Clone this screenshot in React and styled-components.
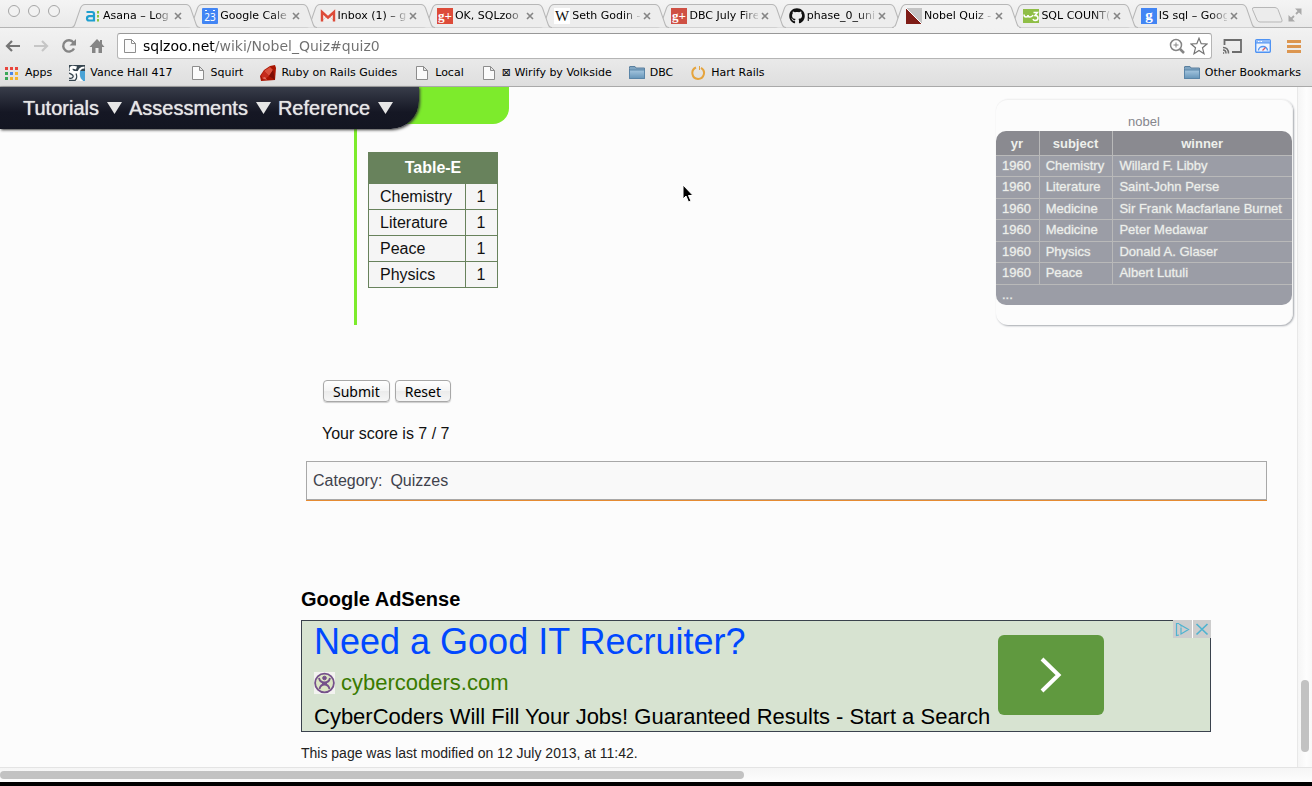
import React from "react";
import styled, { createGlobalStyle } from "styled-components";
import { FaGithub } from "react-icons/fa";

const GlobalStyle = createGlobalStyle`
  *, *::before, *::after { box-sizing: border-box; }
  body {
    margin: 0;
    background: #fcfcfc;
    color: #111;
    font-family: "Liberation Sans", Arial, sans-serif;
  }
  button, input { font: inherit; color: inherit; margin: 0; }
  button { background: none; border: 0; padding: 0; cursor: pointer; }
  a { color: inherit; text-decoration: none; }
  h2, p { margin: 0; }
  svg { display: block; flex: none; }
`;

const Window = styled.div`
  min-height: 100vh;
  display: flex;
  flex-direction: column;
  border-bottom: 4px solid #000;
`;

/* ---------- browser chrome ---------- */

const Chrome = styled.header`
  font-family: "DejaVu Sans", sans-serif;
  font-size: 11px;
  color: #000;
  border-bottom: 1px solid #a9a9a9;
`;

const TabStrip = styled.div`
  display: flex;
  height: 28px;
  background: linear-gradient(#f4f4f4, #e9e9e9);
  box-shadow: inset 0 -1px #b4b4b4;
`;

const Lights = styled.div`
  display: flex;
  gap: 8px;
  width: 71px;
  padding: 5px 0 0 8px;
`;

const Light = styled.button`
  width: 12px;
  height: 12px;
  border: 1px solid #a6a6a6;
  border-radius: 50%;
  background: #f2f2f2;
`;

const Tabs = styled.div`
  flex: 1;
  display: flex;
  min-width: 0;
`;

const Tab = styled.div`
  position: relative;
  flex: 1 1 0;
  min-width: 0;
  display: flex;
  align-items: center;
  padding: 4px 3px 0 14px;
  z-index: ${(p) => p.$z};
`;

const TabShape = styled.svg`
  position: absolute;
  top: 3px;
  left: 0;
  width: 110%;
  height: 25px;
`;

const TabTitle = styled.button`
  position: relative;
  display: flex;
  align-items: center;
  gap: 2px;
  flex: 1;
  min-width: 0;
`;

const TabText = styled.span`
  flex: 1;
  min-width: 0;
  white-space: nowrap;
  text-align: left;
  line-height: 16px;
  mask-image: linear-gradient(90deg, #000 75%, #0002);
`;

const TabClose = styled.button`
  position: relative;
  padding: 3px;
`;

const StripEnd = styled.div`
  display: flex;
  width: 68px;
  justify-content: space-between;
  padding: 2px 10px 0 7px;
`;

const Toolbar = styled.div`
  display: flex;
  align-items: center;
  height: 32px;
  padding: 3px 7px 0 5px;
  background: linear-gradient(#f2f2f2, #e9e9e9);
`;

const IconButton = styled.button`
  display: flex;
  justify-content: center;
  width: ${(p) => p.$w}px;
`;

const Omnibox = styled.label`
  flex: 1;
  display: flex;
  align-items: center;
  height: 26px;
  margin-right: 9px;
  padding: 0 3px 0 4px;
  gap: 5px;
  background: #fff;
  border: 1px solid #b5b5b5;
  border-top-color: #989898;
  border-radius: 3px;
`;

const Address = styled.input`
  flex: 1;
  min-width: 0;
  height: 24px;
  padding: 0;
  border: 0;
  outline: 0;
  font-size: 14px;
  background: linear-gradient(90deg, #000 72px, #707070 72px);
  background-clip: text;
  -webkit-text-fill-color: transparent;
`;

const Bookmarks = styled.nav`
  display: flex;
  align-items: center;
  height: 26px;
  padding: 0 11px 1px 4px;
  background: linear-gradient(#e9e9e9, #dedede);
`;

const Bookmark = styled.a`
  display: flex;
  align-items: center;
  gap: ${(p) => p.$gap || 5}px;
  margin-right: 17px;
  white-space: nowrap;
  &:last-child { margin: 0 0 0 auto; }
`;

/* ---------- web page ---------- */

const Viewport = styled.div`
  flex: 1;
  display: flex;
`;

const Page = styled.main`
  position: relative;
  flex: 1;
  min-width: 0;
  background: #fcfcfc;
`;

const SiteNav = styled.nav`
  position: absolute;
  top: 0;
  left: 0;
  z-index: 2;
  display: flex;
  gap: 7px;
  padding: 0 26px 0 23px;
  height: 42px;
  border-bottom-right-radius: 28px;
  background: linear-gradient(#383d4a, #151724 60%, #131521);
  box-shadow: 1px 1px 3px #333;
`;

const NavLink = styled.a`
  display: flex;
  align-items: center;
  gap: 8px;
  font-size: 20px;
  line-height: 40px;
  color: #e6e6e6;
  padding-bottom: 1px;
  text-shadow: 0 0 1px #e6e6e6;
`;

const QuizRow = styled.section`
  display: flex;
  justify-content: space-between;
  align-items: flex-start;
  padding-right: 4px;
`;

const Question = styled.div`
  height: 238px;
  margin-left: 354px;
  border-left: 3px solid #7deb2c;
`;

const QuestionTab = styled.div`
  width: 152px;
  height: 37px;
  background: #7deb2c;
  border-bottom-right-radius: 16px;
`;

const AnswerTable = styled.table`
  margin: 28px 0 0 11px;
  width: 130px;
  border-collapse: collapse;
  font-size: 16px;
  line-height: 25px;
  background: #f5f5f5;
  th, td { border: 1px solid #68825c; padding: 0 11px; text-align: left; }
  th { background: #68825c; color: #fff; text-align: center; line-height: 30px; }
`;

const SchemaCard = styled.aside`
  width: 297px;
  margin-top: 12px;
  padding-bottom: 20px;
  border: 1px solid #f0f0f0;
  border-width: 1px 1px 0 0;
  border-radius: 12px;
  box-shadow: 1px 1px 2px #a5a8ae;
`;

const SchemaTable = styled.table`
  width: 100%;
  height: 174px;
  border-collapse: collapse;
  border-radius: 10px;
  overflow: hidden;
  font-size: 13px;
  line-height: 16px;
  color: #eef0ec;
  caption { color: #85868c; padding: 14px 0 1px; }
  thead tr { height: 24px; }
  tbody { background: #9b9da6; }
  th, td { padding: 0 7px 0 6px; text-align: left; white-space: nowrap; border-top: 1px solid #b9b9b9; }
  th { padding-top: 2px; text-align: center; border-top: 0; background: #8a8a90; }
  th:first-child { border-top-left-radius: 10px; }
  th:last-child { border-top-right-radius: 10px; }
  td { -webkit-text-stroke: 1px #eef0ec55; }
  th + th, td + td { border-left: 1px solid #b9b9b9; }
`;

const Controls = styled.form`
  padding: 55px 0 0 322px;
  font-size: 16px;
  line-height: 20px;
`;

const ButtonRow = styled.div`
  display: flex;
  gap: 5px;
  padding-left: 1px;
`;

const FormButton = styled.button`
  height: 22px;
  padding: 2px 9px 0;
  border: 1px solid #a8a8a8;
  border-radius: 4px;
  background: linear-gradient(#fff, #f4f4f4 50%, #ebebeb 50%, #f6f6f6);
  box-shadow: 0 1px 1px #ccc;
  font: 14px/18px "Noto Sans", "Open Sans", sans-serif;
  color: #000;
`;

const Score = styled.p`
  padding: 22px 0 17px;
`;

const Category = styled.div`
  display: flex;
  gap: 8px;
  margin: 0 30px 0 306px;
  padding: 9px 6px;
  border: 1px solid #a8a8a8;
  box-shadow: 0 1px #e58b32;
  background: #f9f9f9;
  font-size: 16px;
  line-height: 19px;
  color: #3f424c;
`;

const AdSection = styled.section`
  margin: 87px 86px 0 301px;
`;

const AdTitle = styled.h2`
  font-size: 20px;
  line-height: 24px;
  color: #000;
`;

const Ad = styled.div`
  position: relative;
  display: flex;
  height: 112px;
  margin-top: 9px;
  padding-left: 12px;
  gap: 8px;
  border: 1px solid #3a424d;
  background: #d7e3d1;
`;

const AdCopy = styled.div`
  display: flex;
  flex-direction: column;
  white-space: nowrap;
`;

const AdHeadline = styled.a`
  font-size: 36px;
  line-height: 42px;
  color: #0048ff;
`;

const AdSite = styled.a`
  display: flex;
  align-items: center;
  gap: 6px;
  font-size: 22px;
  line-height: 24px;
  padding: 8px 0 7px;
  color: #3a7a00;
`;

const AdText = styled.p`
  font-size: 22px;
  line-height: 30px;
  color: #000;
`;

const AdGo = styled.button`
  display: flex;
  align-items: center;
  justify-content: center;
  width: 106px;
  height: 80px;
  margin-top: 14px;
  border-radius: 6px;
  background: #60993f;
`;

const AdChoices = styled.div`
  position: absolute;
  top: -1px;
  right: -1px;
  display: flex;
  gap: 1px;
  background: #fff;
  button { background: #cdcdcd; }
`;

const Modified = styled.p`
  margin-top: 12px;
  padding-bottom: 5px;
  font-size: 14px;
  line-height: 18px;
  color: #222;
`;

const VerticalBar = styled.div`
  display: flex;
  flex-direction: column;
  justify-content: flex-end;
  align-items: center;
  width: 15px;
  padding-bottom: 15px;
  border-left: 1px solid #e8e8e8;
  background: linear-gradient(90deg, #f5f5f5, #fdfdfd 60%, #f8f8f8);
`;

const HorizontalBar = styled.div`
  display: grid;
  grid-template-columns: 744fr 568fr;
  align-items: center;
  height: 15px;
  border-top: 1px solid #e4e4e4;
  background: linear-gradient(#f5f5f5, #fdfdfd);
`;

const Thumb = styled.div`
  border-radius: 4px;
  background: #c2c2c2;
  ${(p) => (p.$vertical ? "width: 8px; height: 72px;" : "height: 8px;")}
`;

const Pointer = styled.svg`
  position: absolute;
  top: 97px;
  left: 682px;
`;

/* ---------- icons ---------- */

const Tile = ({ bg, fg = "#fff", size = 13, y = 12, serif, bold, children }) => (
  <svg width="16" height="16" viewBox="0 0 16 16">
    <rect width="16" height="16" fill={bg} />
    <text
      x="8"
      y={y}
      fill={fg}
      fontSize={size}
      fontWeight={bold ? 700 : 400}
      textAnchor="middle"
      fontFamily={serif ? "Liberation Serif, serif" : "Liberation Sans, sans-serif"}
    >
      {children}
    </text>
  </svg>
);

const AsanaIcon = () => (
  <svg width="16" height="16" viewBox="0 0 16 16" fill="none">
    <path d="M1.500 4H7Q9 4 9 6V12.500H4Q2 12.500 2 10.500T4 8.200H9" stroke="#1f9fd0" strokeWidth="2.200" />
    <path d="M12 3h2v2.500H12zM12 7h2v2.500H12zM12 11h2v2.500H12z" fill="#8cc63f" />
  </svg>
);

const CalendarIcon = () => (
  <svg width="16" height="16" viewBox="0 0 16 16">
    <rect width="16" height="16" rx="1" fill="#4285f4" />
    <path d="M3 2h2v1H3zM11 2h2v1h-2z" fill="#fff" />
    <text x="8" y="13" fill="#fff" fontSize="10" textAnchor="middle" fontFamily="Noto Sans, sans-serif">23</text>
  </svg>
);

const MailIcon = () => (
  <svg width="16" height="16" viewBox="0 0 16 16" fill="none">
    <path d="M2 3h12v10H2z" fill="#f4f0ef" />
    <path d="M2 13l5-5M14 13l-5-5" stroke="#d8d4d3" />
    <path d="M2 13.500V4l6 5.500L14 4v9.500" stroke="#dd4b39" strokeWidth="2.400" />
  </svg>
);

const SqlZooIcon = () => (
  <svg width="16" height="16" viewBox="0 0 16 16">
    <path d="M0 0h16v16z" fill="#c4c4c4" />
    <path d="M0 0l16 16H0z" fill="#7f1d17" />
    <path d="M0 0l16 16" stroke="#fff" />
  </svg>
);

const W3Icon = () => (
  <svg width="16" height="16" viewBox="0 0 16 16" fill="none">
    <path d="M0 1h16v14H0z" fill="#8fbe46" />
    <path d="M1 6.500q0 2.500 2 2.500t2-2q0 2 2 2t3-2M10.500 4.500h4l-2.500 3q3 0 3 2.500t-3 2.500q-1.500 0-2-1.500" stroke="#fff" strokeWidth="1.500" />
  </svg>
);

const CloseIcon = () => (
  <svg width="8" height="8" viewBox="0 0 8 8" stroke="#858585" strokeWidth="1.600">
    <path d="M1 1l6 6M7 1L1 7" />
  </svg>
);

const FileIcon = () => (
  <svg width="16" height="16" viewBox="0 0 16 16" fill="#fbfbfb" stroke="#8d8d8d">
    <path d="M2.500 1.500h7l4 4v9h-11zM9.500 1.500v4h4" />
  </svg>
);

const FolderIcon = () => (
  <svg width="16" height="16" viewBox="0 0 16 16">
    <defs>
      <linearGradient id="folder" x2="0" y2="1">
        <stop stopColor="#a5c6df" />
        <stop offset="1" stopColor="#6695b9" />
      </linearGradient>
    </defs>
    <path d="M.5 3.500V2q0-.5.5-.5h5l1 1.500h8.500v10.500H.5z" fill="#7fa5c2" stroke="#5a7f9e" />
    <path d="M.5 5h15v8.500H.5z" fill="url(#folder)" stroke="#5a85a8" />
  </svg>
);

const AppsIcon = () => {
  const colors = ["#e8453c", "#e8453c", "#e8453c", "#3aa757", "#4a86e8", "#f2b42e", "#3aa757", "#f2b42e", "#f2b42e"];
  return (
    <svg width="14" height="14" viewBox="0 0 14 14">
      {colors.map((c, i) => (
        <rect key={i} x={1 + (i % 3) * 5} y={1 + Math.floor(i / 3) * 5} width="3" height="3" fill={c} />
      ))}
    </svg>
  );
};

const VanceIcon = () => (
  <svg width="16" height="16" viewBox="0 0 16 16" fill="none">
    <path d="M0 0h16v6H0z" fill="#36454f" />
    <path d="M0 6h10v10H0z" fill="#f2f2f2" />
    <path d="M11 6h5v10h-2q-4-4-3-10z" fill="#4ba3d6" />
    <path d="M7.500 3Q2 1 2 4t4.500 4 0 6Q4 16 0 14" stroke="#fff" strokeWidth="3" />
    <path d="M0 8q5 2 4 4t-4 1M0 15.500h6q3-3 1-7" stroke="#36454f" strokeWidth="1.300" />
    <path d="M15.500 2.500q-6 0-6 6.500t4 7" stroke="#fff" strokeWidth="2" />
  </svg>
);

const RubyIcon = () => (
  <svg width="16" height="16" viewBox="0 0 16 16">
    <path d="M10 1l5-1 1 3-1 12-14 1-1-5 4-6z" fill="#a91401" />
    <path d="M4 6l6-4 3 3-4 6z" fill="#d8503c" />
    <path d="M1 11l3-5 5 5-5 4z" fill="#c52b1b" />
    <path d="M9 11l4-6 2 10z" fill="#7d0d04" />
    <path d="M2 13l3-1 2 3" fill="#e07060" />
  </svg>
);

const RingIcon = () => (
  <svg width="16" height="16" viewBox="0 0 16 16" fill="none" stroke="#e5a43e" strokeWidth="2">
    <path d="M6 2.500A6 6 0 0 0 8 14 6 6 0 0 0 11 2.800" />
    <path d="M9.500 1v4" strokeWidth="1" />
  </svg>
);

const BackIcon = ({ color = "#757575", flip }) => (
  <svg width="16" height="14" viewBox="0 0 16 14" fill="none" stroke={color} strokeWidth="2.200">
    <path d={flip ? "M1 7h13M9 2l5 5-5 5" : "M15 7H2M7 2L2 7l5 5"} />
  </svg>
);

const ReloadIcon = () => (
  <svg width="16" height="16" viewBox="0 0 16 16" fill="none">
    <path d="M12.500 4.500A5.700 5.700 0 1 0 13 10.500" stroke="#858585" strokeWidth="2.400" />
    <path d="M15 1v6.500H8.500z" fill="#858585" />
  </svg>
);

const HomeIcon = () => (
  <svg width="16" height="16" viewBox="0 0 16 16" fill="#858585">
    <path d="M8 1l3 3V2h2v4l2.500 3H13v6H9.500v-5h-3v5H3V9H.5z" />
  </svg>
);

const MagnifierIcon = () => (
  <svg width="16" height="16" viewBox="0 0 16 16" fill="none" stroke="#858585">
    <circle cx="7" cy="7" r="5.500" strokeWidth="1.500" />
    <path d="M7 4.500v5M4.500 7h5" />
    <path d="M11 11l4 4" strokeWidth="2.500" />
  </svg>
);

const StarIcon = () => (
  <svg width="18" height="18" viewBox="0 0 18 18" fill="#fff" stroke="#747474" strokeWidth="1.200">
    <path d="M9 1.200l2.200 5.500 5.800.3-4.500 3.800 1.500 5.900L9 13.400l-5 3.300 1.500-5.900L1 7l5.800-.3z" />
  </svg>
);

const CastIcon = () => (
  <svg width="19" height="16" viewBox="0 0 19 16" fill="none" stroke="#6c6c6c">
    <path d="M1.500 7V2h16.500v12H9" strokeWidth="1.800" />
    <path d="M0 9.500q5.500 0 5.500 6M0 12q3 0 3 3.500M0 14.500l1 1" strokeWidth="1.500" />
  </svg>
);

const SpeedIcon = () => (
  <svg width="16" height="14" viewBox="0 0 16 14" fill="none">
    <rect x=".7" y=".7" width="14.600" height="12.600" rx="1" fill="#eef4fe" stroke="#4f93f3" strokeWidth="1.400" />
    <path d="M1 1h14v3H1z" fill="#8db8f7" />
    <path d="M1 4h14" stroke="#4f93f3" />
    <path d="M3 2.500h1.500M5.500 2.500h1.500" stroke="#fff" />
    <path d="M3.500 11.500a4.500 4 0 0 1 9 0" stroke="#4f93f3" strokeWidth="1.400" />
    <path d="M7.500 11.500l3-3" stroke="#d55" strokeWidth="1.200" />
  </svg>
);

const MenuIcon = () => (
  <svg width="14" height="14" viewBox="0 0 14 14" fill="#dc9650">
    <path d="M0 1h14v3H0zM0 6h14v3H0zM0 11h14v3H0z" />
  </svg>
);

const NewTabIcon = () => (
  <svg width="32" height="18" viewBox="0 0 32 18" fill="#ececec" stroke="#b7b7b7">
    <path d="M3 1.500h21q2 0 3 2l4 10.500q.5 2-1 2H9q-2 0-3-2L1.500 3.500Q1 1.500 3 1.500z" />
  </svg>
);

const ExpandIcon = () => (
  <svg width="14" height="14" viewBox="0 0 14 14" fill="#a9a9a9" stroke="#a9a9a9">
    <path d="M7 0.500h6.500V7zM.5 7v6.500H7z" stroke="none" />
    <path d="M8 6l4-4M6 8l-4 4" strokeWidth="1.800" />
  </svg>
);

const TriangleIcon = () => (
  <svg width="15" height="12" viewBox="0 0 15 12" fill="#e6e6e6">
    <path d="M0 0h15L7.500 12z" />
  </svg>
);

const CyberIcon = () => (
  <svg width="21" height="22" viewBox="0 0 21 22" fill="none" stroke="#75518a">
    <rect width="21" height="22" fill="#f3f3f0" stroke="none" />
    <circle cx="10.500" cy="11" r="9.400" fill="#dce6c4" strokeWidth="1.800" />
    <circle cx="10.500" cy="6" r="1.800" fill="#75518a" />
    <path d="M5 6q1 4.500 5.500 4.500T16 6M5.500 17q1-4.500 5-4.500t5 4.500M8 11.500h5" strokeWidth="1.900" />
  </svg>
);

const ArrowIcon = () => (
  <svg width="22" height="36" viewBox="0 0 22 36" fill="none" stroke="#fff" strokeWidth="4">
    <path d="M2 2l16.500 16L2 34" />
  </svg>
);

const InfoIcon = () => (
  <svg width="19" height="18" viewBox="0 0 19 18" fill="none" stroke="#4fb3d0" strokeWidth="1.200">
    <path d="M6 3.500L3.500 3.500V15.500L6 15M6 4l9.500 5.500L8 14V7.500M8 5.500v1" />
  </svg>
);

const DismissIcon = () => (
  <svg width="18" height="18" viewBox="0 0 18 18" fill="none" stroke="#4fb3d0" strokeWidth="1.700">
    <path d="M3.500 4l11 10.500M14.500 4l-11 10.500" />
  </svg>
);

/* ---------- data ---------- */

const tabs = [
  { title: "Asana – Log", icon: <AsanaIcon /> },
  { title: "Google Cale", icon: <CalendarIcon /> },
  { title: "Inbox (1) – g", icon: <MailIcon /> },
  { title: "OK, SQLzoo", icon: <Tile bg="#dd4b39" serif bold>g+</Tile> },
  { title: "Seth Godin -", icon: <Tile bg="#fff" fg="#111" serif size={15} y={13}>W</Tile> },
  { title: "DBC July Fire", icon: <Tile bg="#cf5044" serif bold>g+</Tile> },
  { title: "phase_0_uni", icon: <FaGithub size={16} color="#111" /> },
  { title: "Nobel Quiz -", icon: <SqlZooIcon />, active: true },
  { title: "SQL COUNT(", icon: <W3Icon /> },
  { title: "IS sql – Goog", icon: <Tile bg="#4285f4" serif bold size={15}>g</Tile> },
];

const bookmarks = [
  { label: "Apps", icon: <AppsIcon />, gap: 7 },
  { label: "Vance Hall 417", icon: <VanceIcon /> },
  { label: "Squirt", icon: <FileIcon /> },
  { label: "Ruby on Rails Guides", icon: <RubyIcon /> },
  { label: "Local", icon: <FileIcon /> },
  { label: "⊠ Wirify by Volkside", icon: <FileIcon /> },
  { label: "DBC", icon: <FolderIcon /> },
  { label: "Hart Rails", icon: <RingIcon /> },
  { label: "Other Bookmarks", icon: <FolderIcon /> },
];

const answers = ["Chemistry", "Literature", "Peace", "Physics"];

const winners = [
  ["Chemistry", "Willard F. Libby"],
  ["Literature", "Saint-John Perse"],
  ["Medicine", "Sir Frank Macfarlane Burnet"],
  ["Medicine", "Peter Medawar"],
  ["Physics", "Donald A. Glaser"],
  ["Peace", "Albert Lutuli"],
];

const BrowserTab = ({ tab, z }) => (
  <Tab $z={z}>
    <TabShape viewBox="0 0 129 25" preserveAspectRatio="none">
      <path
        d="M0 24.500Q3 24.500 4 21L9.500 5Q11 1.500 14 1.500H115Q118 1.500 119.500 5L125 21Q126 24.500 129 24.500"
        fill={tab.active ? "#f2f2f2" : "#ededed"}
        stroke="#b7b7b7"
      />
      {tab.active && <path d="M2 24.500h125" stroke="#f2f2f2" strokeWidth="1.500" />}
    </TabShape>
    <TabTitle>
      {tab.icon}
      <TabText>{tab.title}</TabText>
    </TabTitle>
    <TabClose aria-label="Close tab"><CloseIcon /></TabClose>
  </Tab>
);

export default function App() {
  return (
    <Window>
      <GlobalStyle />
      <Chrome>
        <TabStrip>
          <Lights>
            <Light aria-label="Close" />
            <Light aria-label="Minimize" />
            <Light aria-label="Zoom" />
          </Lights>
          <Tabs>
            {tabs.map((tab, i) => (
              <BrowserTab key={tab.title} tab={tab} z={tab.active ? 20 : 10 - i} />
            ))}
          </Tabs>
          <StripEnd>
            <button aria-label="New tab"><NewTabIcon /></button>
            <button aria-label="Full screen"><ExpandIcon /></button>
          </StripEnd>
        </TabStrip>
        <Toolbar>
          <IconButton $w={16} aria-label="Back"><BackIcon /></IconButton>
          <IconButton $w={40} aria-label="Forward"><BackIcon flip color="#c6c6c6" /></IconButton>
          <IconButton $w={16} aria-label="Reload"><ReloadIcon /></IconButton>
          <IconButton $w={40} aria-label="Home"><HomeIcon /></IconButton>
          <Omnibox>
            <FileIcon />
            <Address aria-label="Address" defaultValue="sqlzoo.net/wiki/Nobel_Quiz#quiz0" />
            <MagnifierIcon />
            <StarIcon />
          </Omnibox>
          <IconButton $w={22} aria-label="Cast"><CastIcon /></IconButton>
          <IconButton $w={40} aria-label="Page speed"><SpeedIcon /></IconButton>
          <IconButton $w={22} aria-label="Menu"><MenuIcon /></IconButton>
        </Toolbar>
        <Bookmarks>
          {bookmarks.map((b) => (
            <Bookmark key={b.label} href="#" $gap={b.gap}>
              {b.icon}
              {b.label}
            </Bookmark>
          ))}
        </Bookmarks>
      </Chrome>

      <Viewport>
        <Page>
          <SiteNav>
            {["Tutorials", "Assessments", "Reference"].map((name) => (
              <NavLink key={name} href="#">
                {name}
                <TriangleIcon />
              </NavLink>
            ))}
          </SiteNav>

          <QuizRow>
            <Question>
              <QuestionTab />
              <AnswerTable>
                <thead>
                  <tr><th colSpan={2}>Table-E</th></tr>
                </thead>
                <tbody>
                  {answers.map((a) => (
                    <tr key={a}><td>{a}</td><td>1</td></tr>
                  ))}
                </tbody>
              </AnswerTable>
            </Question>
            <SchemaCard>
              <SchemaTable>
                <caption>nobel</caption>
                <thead>
                  <tr><th>yr</th><th>subject</th><th>winner</th></tr>
                </thead>
                <tbody>
                  {winners.map(([subject, winner]) => (
                    <tr key={winner}><td>1960</td><td>{subject}</td><td>{winner}</td></tr>
                  ))}
                  <tr><td colSpan={3}>...</td></tr>
                </tbody>
              </SchemaTable>
            </SchemaCard>
          </QuizRow>

          <Controls onSubmit={(e) => e.preventDefault()}>
            <ButtonRow>
              <FormButton type="submit">Submit</FormButton>
              <FormButton type="reset">Reset</FormButton>
            </ButtonRow>
            <Score>Your score is 7 / 7</Score>
          </Controls>

          <Category>
            <a href="#">Category:</a>
            <a href="#">Quizzes</a>
          </Category>

          <AdSection>
            <AdTitle>Google AdSense</AdTitle>
            <Ad>
              <AdCopy>
                <AdHeadline href="#">Need a Good IT Recruiter?</AdHeadline>
                <AdSite href="#"><CyberIcon />cybercoders.com</AdSite>
                <AdText>CyberCoders Will Fill Your Jobs! Guaranteed Results - Start a Search</AdText>
              </AdCopy>
              <AdGo aria-label="Open advertisement"><ArrowIcon /></AdGo>
              <AdChoices>
                <button aria-label="Ad information"><InfoIcon /></button>
                <button aria-label="Dismiss ad"><DismissIcon /></button>
              </AdChoices>
            </Ad>
            <Modified>This page was last modified on 12 July 2013, at 11:42.</Modified>
          </AdSection>

          <Pointer width="12" height="19" viewBox="0 0 12 19">
            <path d="M1 1v14l3-3 2.500 6 2.500-1-2.500-5.500H11z" fill="#000" stroke="#fff" />
          </Pointer>
        </Page>
        <VerticalBar><Thumb $vertical /></VerticalBar>
      </Viewport>
      <HorizontalBar><Thumb /></HorizontalBar>
    </Window>
  );
}
